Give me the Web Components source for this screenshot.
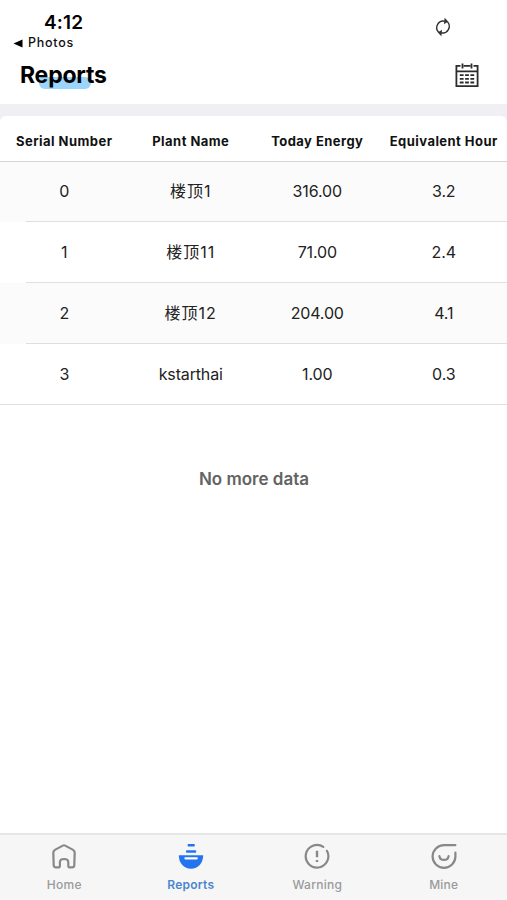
<!DOCTYPE html>
<html lang="en">
<head>
<meta charset="utf-8">
<title>Reports</title>
<style>
  html, body {
    height: 100%;
    margin: 0;
  }
  body {
    background: #fff;
    overflow: hidden;
    color: #000;
    font-family: Inter, "Noto Sans CJK SC", sans-serif;
  }
</style>
</head>
<body>
<reports-app></reports-app>

<script>
// ---------- status bar ----------
class StatusBar extends HTMLElement {
  constructor() {
    super();
    this.attachShadow({ mode: 'open' }).innerHTML = `
      <style>
        :host {
          display: flex;
          justify-content: space-between;
          height: 50px;
          box-sizing: border-box;
          padding: 13px 54px 0 13px;
        }
        .time {
          margin-left: 31px;
          font-size: 19px;
          font-weight: 600;
          line-height: 20px;
          letter-spacing: 0.2px;
        }
        .back {
          display: flex;
          align-items: center;
          gap: 5px;
          margin-top: 2px;
          color: #111;
          font-size: 12.5px;
          font-weight: 500;
          line-height: 16px;
          letter-spacing: 0.75px;
        }
        .back svg {
          width: 10px;
          height: 9px;
        }
        .sync {
          width: 20px;
          height: 20px;
          margin-top: 4px;
        }
      </style>
      <div>
        <div class="time"><slot name="time"></slot></div>
        <div class="back">
          <svg viewBox="0 0 10 9"><path d="M9.5 0.5v8L0.5 4.5z"/></svg>
          <slot name="back"></slot>
        </div>
      </div>
      <svg class="sync" viewBox="0 0 20 20" fill="none" stroke="#333" stroke-width="1.4">
        <path d="M5.6 15.2A6.6 6.6 0 0 1 11.8 4.2"/>
        <path d="M14.4 4.8A6.6 6.6 0 0 1 8.2 15.8"/>
        <path d="M11.6 0.8L15.2 4.6L11 7.2z" fill="#333" stroke="none"/>
        <path d="M8.4 19.2L4.8 15.4L9 12.8z" fill="#333" stroke="none"/>
      </svg>
    `;
  }
}
customElements.define('status-bar', StatusBar);

// ---------- title bar ----------
class TitleBar extends HTMLElement {
  constructor() {
    super();
    this.attachShadow({ mode: 'open' }).innerHTML = `
      <style>
        :host {
          display: flex;
          justify-content: space-between;
          align-items: flex-start;
          height: 54px;
          box-sizing: border-box;
          padding: 11px 27px 0 20px;
        }
        h1 {
          position: relative;
          margin: 0;
          font-size: 23px;
          font-weight: 700;
          line-height: 28px;
          letter-spacing: -0.2px;
        }
        /* highlight under the middle of the word */
        h1::before {
          content: "";
          position: absolute;
          z-index: -1;
          left: 19px;
          top: 16px;
          width: 52px;
          height: 12px;
          border-radius: 3px 6px 6px 6px;
          background: #9bd5fb;
        }
        svg {
          width: 26px;
          height: 26px;
          margin-top: 1px;
        }
      </style>
      <h1><slot></slot></h1>
      <svg viewBox="0 0 26 26" fill="none" stroke="#2c2c2c" stroke-width="1.8">
        <path d="M6.5 3.9H2.4V24.1H23.6V3.9H19.5M9.5 3.9H16.5M2.4 9.4H23.6"/>
        <path d="M8.5 1.4V6.4M17.5 1.4V6.4"/>
        <path d="M5.8 13.1h3.8M11.1 13.1h3.8M16.4 13.1h3.8M5.8 16.8h3.8M11.1 16.8h3.8M16.4 16.8h3.8M5.8 20.5h3.8M11.1 20.5h3.8M16.4 20.5h3.8"/>
      </svg>
    `;
  }
}
customElements.define('title-bar', TitleBar);

// ---------- table ----------
class ReportRow extends HTMLElement {
  constructor() {
    super();
    this.attachShadow({ mode: 'open' }).innerHTML = `
      <style>
        :host {
          display: grid;
          grid-template-columns: repeat(4, 1fr);
          align-items: center;
          height: 61px;
          box-sizing: border-box;
          padding: 0 0 2px 1px;
          text-align: center;
          white-space: nowrap;
          color: #222;
          font-size: 16px;
          line-height: 20px;
          letter-spacing: -0.15px;
          background: linear-gradient(#dedfe0, #dedfe0) 26px 100% / 100% 1px no-repeat;
        }
        :host([striped]) {
          background-color: #fbfbfb;
        }
        :host([last]) {
          background-position: 0 100%;
        }
        /* the header's rule overlaps the first row by one pixel */
        :host([head]) {
          position: relative;
          height: 46px;
          margin-bottom: -1px;
          padding: 3px 0 0 1px;
          color: #111;
          font-size: 13px;
          font-weight: 700;
          letter-spacing: 0.45px;
          background-image: linear-gradient(#d4d4d6, #d4d4d6);
          background-position: 0 100%;
        }
        ::slotted(:lang(zh)) {
          letter-spacing: 1px;
        }
      </style>
      <div class="cell"><slot name="serial"></slot></div>
      <div class="cell"><slot name="plant"></slot></div>
      <div class="cell"><slot name="energy"></slot></div>
      <div class="cell"><slot name="hour"></slot></div>
    `;
  }
}
customElements.define('report-row', ReportRow);

class ReportTable extends HTMLElement {
  constructor() {
    super();
    this.attachShadow({ mode: 'open' }).innerHTML = `
      <style>
        :host {
          display: block;
          padding-top: 12px;
          background: linear-gradient(#f0f0f4 24px, #fff 24px);
        }
        .card {
          border-radius: 6px 6px 0 0;
          overflow: hidden;
          background: #fff;
        }
      </style>
      <div class="card"><slot></slot></div>
    `;
  }
}
customElements.define('report-table', ReportTable);

// ---------- tab bar ----------
const ICONS = {
  home: `<path d="M6.2 24.4H4.9Q2.8 24.4 2.7 22.3L2.3 9.4Q2.3 7.7 3.9 6.9L11.8 2.6Q13 1.9 14.2 2.6L22.1 6.9Q23.7 7.7 23.7 9.4L23.3 22.3Q23.2 24.4 21.1 24.4H19Q17.3 24.4 17.3 22.7V19.2Q17.3 16 13 16Q8.9 16 8.9 19.2V22.7Q8.9 24.4 7.2 24.4z"/>`,
  reports: `<g stroke="none" fill="currentColor"><rect x="9.6" y="1" width="7.2" height="2.6" rx=".8"/><rect x="8" y="7.2" width="10.2" height="2.6" rx=".8"/><path d="M.8 12.2H25.2C25.2 20 20 25.8 13 25.8S.8 20 .8 12.2z"/></g><path d="M7.4 15.3H18.8" stroke="#fff" stroke-width="2.2"/>`,
  warning: `<path d="M19.3 3.9A11.3 11.3 0 1 0 22.9 7.8"/><path d="M13 7.7V14.2M13 16.9V19" stroke-width="2.4" stroke-linecap="butt"/>`,
  mine: `<path d="M24.4 2.1H13A11.4 11.4 0 1 0 24.4 13.5V9.6"/><path d="M8.4 13.2A4.7 4.7 0 0 0 17.6 13.2"/>`
};

class TabItem extends HTMLElement {
  constructor() {
    super();
    this.attachShadow({ mode: 'open' }).innerHTML = `
      <style>
        :host {
          display: flex;
          flex: 1;
          flex-direction: column;
          align-items: center;
          padding-top: 8px;
          color: #9a9a9c;
          font-size: 12px;
          font-weight: 500;
          line-height: 16px;
          letter-spacing: 0.25px;
        }
        :host([active]) {
          color: #4a86cf;
          font-weight: 600;
        }
        svg {
          width: 26px;
          height: 27px;
          margin-bottom: 7px;
          color: #888;
        }
        :host([active]) svg {
          color: #2474f0;
        }
      </style>
      <svg viewBox="0 0 26 27" fill="none" stroke="currentColor" stroke-width="2.2" stroke-linecap="round" stroke-linejoin="round"></svg>
      <slot></slot>
    `;
  }

  connectedCallback() {
    this.shadowRoot.querySelector('svg').innerHTML = ICONS[this.getAttribute('icon')];
  }
}
customElements.define('tab-item', TabItem);

class TabBar extends HTMLElement {
  constructor() {
    super();
    this.attachShadow({ mode: 'open' }).innerHTML = `
      <style>
        :host {
          display: flex;
          height: 67px;
          box-sizing: border-box;
          padding-left: 1px;
          border-top: 2px solid #e6e6e7;
          background: #f6f6f6;
        }
      </style>
      <slot></slot>
    `;
  }
}
customElements.define('tab-bar', TabBar);

// ---------- page ----------
const COLUMNS = ['serial', 'plant', 'energy', 'hour'];
const HEAD = ['Serial Number', 'Plant Name', 'Today Energy', 'Equivalent Hour'];
const ROWS = [
  ['0', '楼顶1', '316.00', '3.2'],
  ['1', '楼顶11', '71.00', '2.4'],
  ['2', '楼顶12', '204.00', '4.1'],
  ['3', 'kstarthai', '1.00', '0.3']
];

function row(values, attrs) {
  const cells = values.map((v, i) => {
    const lang = /[\u4e00-\u9fff]/.test(v) ? ' lang="zh"' : '';
    return `<span slot="${COLUMNS[i]}"${lang}>${v}</span>`;
  }).join('');
  return `<report-row ${attrs}>${cells}</report-row>`;
}

class ReportsApp extends HTMLElement {
  constructor() {
    super();
    this.attachShadow({ mode: 'open' }).innerHTML = `
      <style>
        :host {
          display: flex;
          flex-direction: column;
          height: 100vh;
        }
        main {
          flex: 1;
        }
        .empty {
          margin: 64px 0 0;
          padding-left: 1px;
          text-align: center;
          color: #636363;
          font-size: 17px;
          font-weight: 600;
          line-height: 20px;
        }
      </style>
      <status-bar>
        <span slot="time">4:12</span>
        <span slot="back">Photos</span>
      </status-bar>
      <title-bar>Reports</title-bar>
      <main>
        <report-table>
          ${row(HEAD, 'head')}
          ${ROWS.map((r, i) => row(r, (i % 2 ? '' : 'striped') + (i === ROWS.length - 1 ? ' last' : ''))).join('')}
        </report-table>
        <p class="empty">No more data</p>
      </main>
      <tab-bar>
        <tab-item icon="home">Home</tab-item>
        <tab-item icon="reports" active>Reports</tab-item>
        <tab-item icon="warning">Warning</tab-item>
        <tab-item icon="mine">Mine</tab-item>
      </tab-bar>
    `;
  }
}
customElements.define('reports-app', ReportsApp);
</script>
</body>
</html>
